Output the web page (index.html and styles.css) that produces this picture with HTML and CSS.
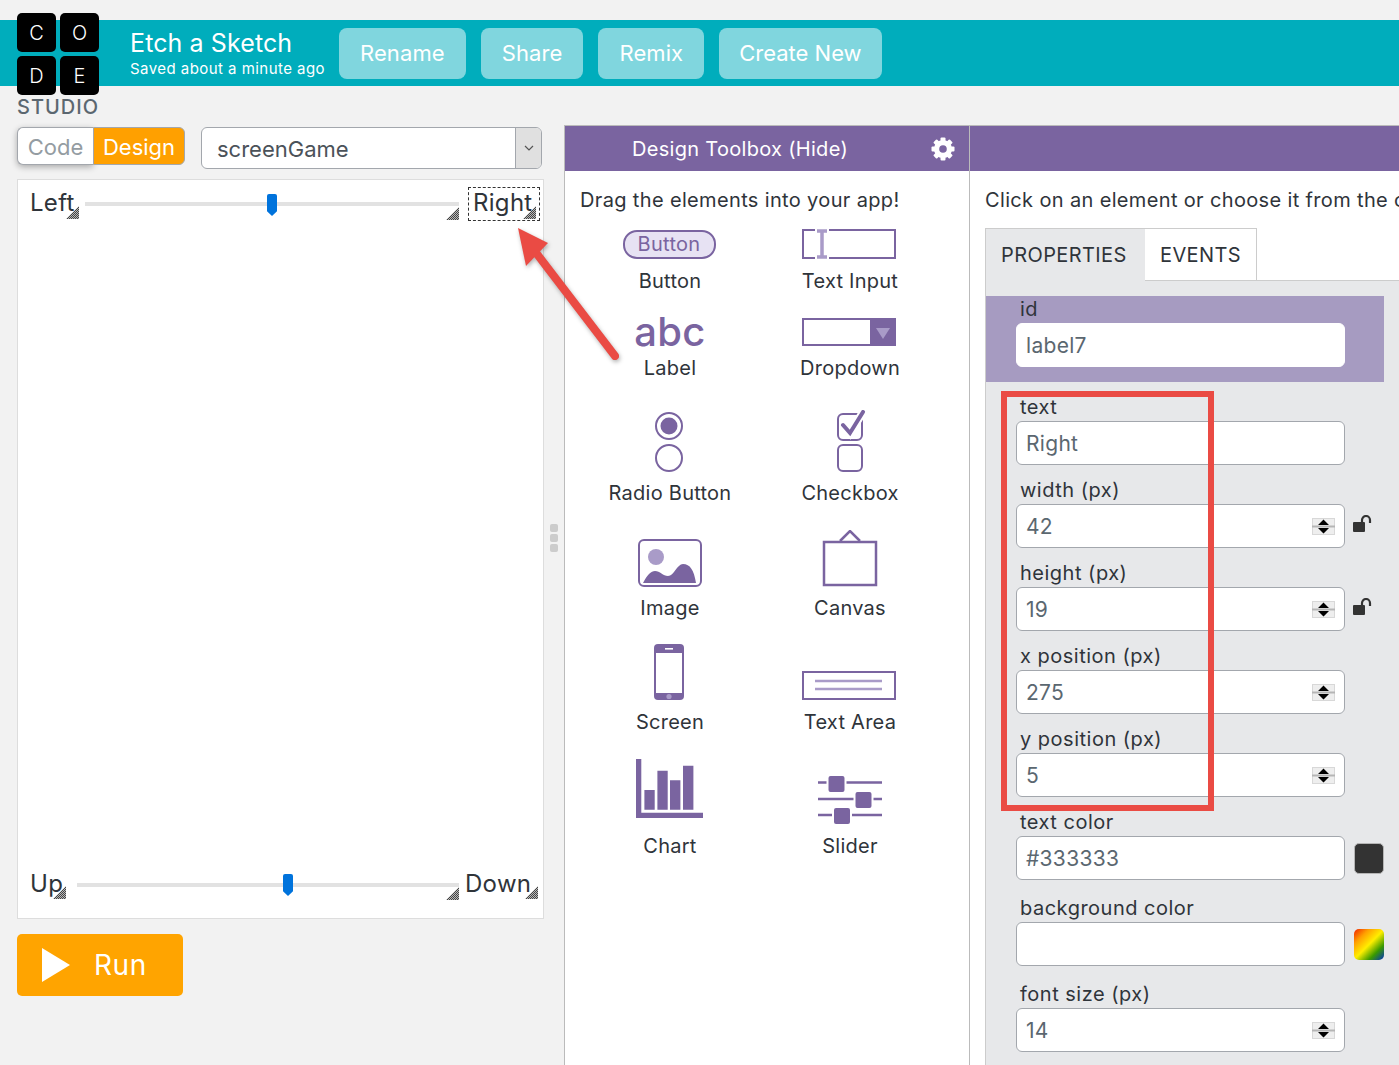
FILE: index.html
```html
<!doctype html>
<html>
<head>
    <title>Etch a Sketch - App Lab</title>
    <link rel="stylesheet" href="styles.css">
</head>
<body>
<div class="page">
    <!-- Logo sits over the header bar -->
    <div class="logo">
        <div class="logo-grid">
            <span>C</span><span>O</span><span>D</span><span>E</span>
        </div>
        <div class="logo-studio">STUDIO</div>
    </div>

    <header class="header">
        <div class="project">
            <div class="project-name">Etch a Sketch</div>
            <div class="project-saved">Saved about a minute ago</div>
        </div>
        <div class="header-btn">Rename</div>
        <div class="header-btn">Share</div>
        <div class="header-btn">Remix</div>
        <div class="header-btn">Create New</div>
    </header>

    <main class="main">
        <!-- App preview -->
        <section class="left">
            <div class="left-top">
                <div class="toggle">
                    <div class="toggle-code">Code</div>
                    <div class="toggle-design">Design</div>
                </div>
                <div class="screen-select">
                    <div class="screen-name">screenGame</div>
                    <div class="screen-arrow">
                        <svg width="10" height="6" viewBox="0 0 10 6"><path d="M1 1l4 4 4-4" fill="none" stroke="#555" stroke-width="1.2"/></svg>
                    </div>
                </div>
            </div>
            <div class="surface">
                <div class="w-text w-left">Left</div>
                <div class="handle h-left"></div>
                <div class="track track-1"></div>
                <div class="knob knob-1"></div>
                <div class="handle h-slider1"></div>
                <div class="w-selected"></div>
                <div class="w-text w-right">Right</div>
                <div class="handle h-right"></div>
                <div class="w-text w-up">Up</div>
                <div class="handle h-up"></div>
                <div class="track track-2"></div>
                <div class="knob knob-2"></div>
                <div class="handle h-slider2"></div>
                <div class="w-text w-down">Down</div>
                <div class="handle h-down"></div>
            </div>
            <div class="run-btn">
                <svg class="run-icon" width="28" height="34" viewBox="0 0 28 34"><path d="M0 0l28 17L0 34z" fill="#fff"/></svg>
                <span>Run</span>
            </div>
        </section>

        <div class="splitter">
            <div class="grip"><i></i><i></i><i></i></div>
        </div>

        <!-- Toolbox -->
        <section class="toolbox">
            <div class="panel-head">
                <span>Design Toolbox (Hide)</span>
                <svg class="gear" width="24" height="24" viewBox="0 0 24 24">
                    <circle cx="12" cy="12" r="6.6" fill="none" stroke="#fff" stroke-width="5"/>
                    <g fill="#fff">
                        <rect x="9.5" y="0.5" width="5" height="23" rx="1"/>
                        <rect x="9.5" y="0.5" width="5" height="23" rx="1" transform="rotate(45 12 12)"/>
                        <rect x="9.5" y="0.5" width="5" height="23" rx="1" transform="rotate(90 12 12)"/>
                        <rect x="9.5" y="0.5" width="5" height="23" rx="1" transform="rotate(135 12 12)"/>
                    </g>
                    <circle cx="12" cy="12" r="3.8" fill="#7a64a0"/>
                </svg>
            </div>
            <p class="drag-hint">Drag the elements into your app!</p>
            <div class="tools">
                <div class="tool">
                    <div class="ico-button nudge">Button</div>
                    <div class="tool-name">Button</div>
                </div>
                <div class="tool">
                    <svg class="nudge" width="94" height="30" viewBox="0 0 94 30">
                        <path d="M13 1H1v28h12M27 1h66v28H27" fill="none" stroke="#7a64a0" stroke-width="2"/>
                        <path d="M20 1v28M15 2h10M15 28h10" fill="none" stroke="#a99bc8" stroke-width="3.5"/>
                    </svg>
                    <div class="tool-name">Text Input</div>
                </div>
                <div class="tool">
                    <div class="ico-abc">abc</div>
                    <div class="tool-name tool-name-tight">Label</div>
                </div>
                <div class="tool">
                    <svg class="ico-dropdown nudge" width="94" height="28" viewBox="0 0 94 28">
                        <rect x="1" y="1" width="92" height="26" fill="#fff" stroke="#7a64a0" stroke-width="2"/>
                        <rect x="68" y="0" width="26" height="28" fill="#7a64a0"/>
                        <path d="M74 10h14l-7 11z" fill="#a99bc8"/>
                    </svg>
                    <div class="tool-name tool-name-tight">Dropdown</div>
                </div>
                <div class="tool">
                    <svg class="nudge lower" width="28" height="62" viewBox="0 0 28 62">
                        <circle cx="14" cy="16" r="13" fill="none" stroke="#7a64a0" stroke-width="2"/>
                        <circle cx="14" cy="16" r="8.5" fill="#7a64a0"/>
                        <circle cx="14" cy="48" r="13" fill="none" stroke="#7a64a0" stroke-width="2"/>
                    </svg>
                    <div class="tool-name">Radio Button</div>
                </div>
                <div class="tool">
                    <svg class="lower" width="32" height="62" viewBox="0 0 32 62">
                        <rect x="4" y="4" width="24" height="26" rx="5" fill="none" stroke="#7a64a0" stroke-width="2"/>
                        <rect x="4" y="35" width="24" height="26" rx="5" fill="none" stroke="#7a64a0" stroke-width="2"/>
                        <path d="M9 15l7 8L29 2" fill="none" stroke="#fff" stroke-width="8"/>
                        <path d="M9 15l7 8L29 2" fill="none" stroke="#7a64a0" stroke-width="4" stroke-linecap="round"/>
                    </svg>
                    <div class="tool-name">Checkbox</div>
                </div>
                <div class="tool">
                    <svg class="lower" width="64" height="48" viewBox="0 0 64 48">
                        <rect x="1" y="1" width="62" height="46" rx="5" fill="none" stroke="#7a64a0" stroke-width="2"/>
                        <circle cx="18" cy="18" r="8" fill="#a99bc8"/>
                        <path d="M5 44C9 36 13 32 17 32c5 0 8 5 13 5C36 37 39 25 45 25c7 0 11 6 13 19z" fill="#7a64a0"/>
                    </svg>
                    <div class="tool-name">Image</div>
                </div>
                <div class="tool">
                    <svg class="lower" width="56" height="57" viewBox="0 1 56 57">
                        <rect x="2" y="13" width="52" height="43" fill="none" stroke="#7a64a0" stroke-width="2.5"/>
                        <path d="M18 12l10-10 10 10" fill="none" stroke="#7a64a0" stroke-width="2.5"/>
                    </svg>
                    <div class="tool-name">Canvas</div>
                </div>
                <div class="tool">
                    <svg class="nudge" width="30" height="56" viewBox="0 0 30 56">
                        <rect width="30" height="56" rx="4" fill="#7a64a0"/>
                        <rect x="2" y="9" width="26" height="40" fill="#fff"/>
                        <rect x="11" y="4" width="8" height="1.6" fill="#fff"/>
                        <circle cx="15" cy="52.5" r="2.6" fill="#a99bc8"/>
                    </svg>
                    <div class="tool-name">Screen</div>
                </div>
                <div class="tool">
                    <svg class="nudge" width="94" height="29" viewBox="0 0 94 29">
                        <rect x="1" y="1" width="92" height="27" fill="none" stroke="#7a64a0" stroke-width="2"/>
                        <path d="M13 10h67M13 18h67" stroke="#a99bc8" stroke-width="2.4"/>
                    </svg>
                    <div class="tool-name">Text Area</div>
                </div>
                <div class="tool">
                    <svg class="ico-chart" width="68" height="60" viewBox="0 0 68 60">
                        <path d="M0 0h5.3v53.7H67V59H0z" fill="#7a64a0"/>
                        <path d="M8.400 31h10.300v19.700H8.400zM21.400 11.700h10.300v39H21.400zM34 21.300h10.400v29.400H34zM47 6.700h10.400v44H47z" fill="#7a64a0"/>
                    </svg>
                    <div class="tool-name">Chart</div>
                </div>
                <div class="tool">
                    <svg class="lower" width="66" height="50" viewBox="0 0 66 50">
                        <path d="M1 7.500h64M1 24h64M1 40h64" stroke="#7a64a0" stroke-width="2.6"/>
                        <g fill="#7a64a0" stroke="#fff" stroke-width="2">
                            <rect x="10.500" y="0" width="18" height="18" rx="3"/>
                            <rect x="37.500" y="16" width="18" height="18" rx="3"/>
                            <rect x="16" y="32" width="18" height="18" rx="3"/>
                        </g>
                    </svg>
                    <div class="tool-name">Slider</div>
                </div>
            </div>
        </section>

        <!-- Properties -->
        <section class="props">
            <div class="panel-head panel-head-plain"></div>
            <p class="props-hint">Click on an element or choose it from the current screen to change its properties.</p>
            <div class="tabs">
                <div class="tab tab-active">PROPERTIES</div>
                <div class="tab">EVENTS</div>
            </div>
            <div class="tab-body">
                <div class="id-block">
                    <div class="prop-label">id</div>
                    <div class="prop-input prop-input-plain">label7</div>
                </div>
                <div class="prop">
                    <div class="prop-label">text</div>
                    <div class="prop-input">Right</div>
                </div>
                <div class="prop">
                    <div class="prop-label">width (px)</div>
                    <div class="prop-row">
                        <div class="prop-input">42
                            <svg class="spin" width="23" height="17" viewBox="0 0 23 17"><rect x=".5" y=".5" width="22" height="16" fill="#eeeeee" stroke="#d8d8d8"/><rect y="7.500" width="23" height="2" fill="#b5b5b5"/><path d="M11.500 1.500l5.500 5.500h-11zM11.500 15.500l5.500-5.500h-11z"/></svg>
                        </div>
                        <svg class="lock" width="20" height="18" viewBox="0 0 20 18"><rect x="0" y="7" width="12" height="10" rx="1" fill="#333"/><path d="M9 8V5a4 4 0 0 1 8 0v3" fill="none" stroke="#333" stroke-width="2.2"/></svg>
                    </div>
                </div>
                <div class="prop">
                    <div class="prop-label">height (px)</div>
                    <div class="prop-row">
                        <div class="prop-input">19
                            <svg class="spin" width="23" height="17" viewBox="0 0 23 17"><rect x=".5" y=".5" width="22" height="16" fill="#eeeeee" stroke="#d8d8d8"/><rect y="7.500" width="23" height="2" fill="#b5b5b5"/><path d="M11.500 1.500l5.500 5.500h-11zM11.500 15.500l5.500-5.500h-11z"/></svg>
                        </div>
                        <svg class="lock" width="20" height="18" viewBox="0 0 20 18"><rect x="0" y="7" width="12" height="10" rx="1" fill="#333"/><path d="M9 8V5a4 4 0 0 1 8 0v3" fill="none" stroke="#333" stroke-width="2.2"/></svg>
                    </div>
                </div>
                <div class="prop">
                    <div class="prop-label">x position (px)</div>
                    <div class="prop-input">275
                        <svg class="spin" width="23" height="17" viewBox="0 0 23 17"><rect x=".5" y=".5" width="22" height="16" fill="#eeeeee" stroke="#d8d8d8"/><rect y="7.500" width="23" height="2" fill="#b5b5b5"/><path d="M11.500 1.500l5.500 5.500h-11zM11.500 15.500l5.500-5.500h-11z"/></svg>
                    </div>
                </div>
                <div class="prop">
                    <div class="prop-label">y position (px)</div>
                    <div class="prop-input">5
                        <svg class="spin" width="23" height="17" viewBox="0 0 23 17"><rect x=".5" y=".5" width="22" height="16" fill="#eeeeee" stroke="#d8d8d8"/><rect y="7.500" width="23" height="2" fill="#b5b5b5"/><path d="M11.500 1.500l5.500 5.500h-11zM11.500 15.500l5.500-5.500h-11z"/></svg>
                    </div>
                </div>
                <div class="prop">
                    <div class="prop-label">text color</div>
                    <div class="prop-row">
                        <div class="prop-input">#333333</div>
                        <div class="swatch swatch-dark"></div>
                    </div>
                </div>
                <div class="prop prop-wide">
                    <div class="prop-label">background color</div>
                    <div class="prop-row">
                        <div class="prop-input"></div>
                        <div class="swatch swatch-rainbow"></div>
                    </div>
                </div>
                <div class="prop prop-wide">
                    <div class="prop-label">font size (px)</div>
                    <div class="prop-input">14
                        <svg class="spin" width="23" height="17" viewBox="0 0 23 17"><rect x=".5" y=".5" width="22" height="16" fill="#eeeeee" stroke="#d8d8d8"/><rect y="7.500" width="23" height="2" fill="#b5b5b5"/><path d="M11.500 1.500l5.500 5.500h-11zM11.500 15.500l5.500-5.500h-11z"/></svg>
                    </div>
                </div>
            </div>
        </section>
    </main>

    <!-- Screenshot annotations -->
    <svg class="note-arrow" width="120" height="145" viewBox="0 0 120 145">
        <path d="M105 136L27 34" stroke="#ea4b44" stroke-width="8" stroke-linecap="round"/>
        <path d="M8 8l30 15-22 23z" fill="#ea4b44"/>
    </svg>
    <div class="note-box"></div>
</div>
</body>
</html>
```

FILE: styles.css
```css
* {
    box-sizing: border-box;
}
body {
    margin: 0;
    padding: 0;
    font-family: Inter, "Noto Sans", sans-serif;
    background-color: #f2f2f2;
    color: #2f343a;
}
.page {
    position: relative;
    width: 1399px;
    height: 1065px;
    overflow: hidden;
    padding-top: 20px;
}

/* logo */
.logo {
    position: absolute;
    left: 17px;
    top: 13px;
    width: 82px;
}
.logo-grid {
    display: grid;
    grid-template-columns: 39px 39px;
    grid-template-rows: 39px 39px;
    gap: 4px;
}
.logo-grid span {
    display: flex;
    align-items: center;
    justify-content: center;
    background-color: #000000;
    color: #ffffff;
    border-radius: 5px;
    font-size: 20px;
    font-weight: 300;
}
.logo-studio {
    font-size: 20px;
    line-height: 24px;
    font-weight: 500;
    color: #5b6770;
    letter-spacing: 1px;
}

/* header */
.header {
    display: flex;
    align-items: center;
    gap: 15px;
    height: 66px;
    padding-left: 130px;
    background-color: #00adbc;
    color: #ffffff;
}
.project {
    width: 194px;
}
.project-name {
    font-size: 25px;
    line-height: 30px;
    letter-spacing: 0.1px;
}
.project-saved {
    font-size: 15px;
    line-height: 20px;
    margin-top: 1px;
    letter-spacing: 0.45px;
    white-space: nowrap;
}
.header-btn {
    display: flex;
    align-items: center;
    height: 51px;
    padding: 0 21px;
    background-color: #80d6de;
    border-radius: 8px;
    font-size: 22px;
    letter-spacing: 0.1px;
}
.header-btn:last-child {
    padding: 0 20px 0 20px;
    letter-spacing: 0;
}

/* main columns */
.main {
    display: flex;
    height: 979px;
}
.left {
    width: 544px;
    padding: 41px 0 0 17px;
    flex-shrink: 0;
}
.left-top {
    display: flex;
    align-items: flex-start;
    gap: 16px;
    height: 52px;
}
.toggle {
    display: flex;
    width: 168px;
    height: 38px;
    font-size: 22px;
    line-height: 38px;
    text-align: center;
}
.toggle-code {
    width: 76px;
    background-color: #ffffff;
    color: #949ca2;
    border: 1px solid #a3a7ad;
    border-right: 0;
    border-radius: 6px 0 0 6px;
    box-shadow: 0 2px 6px rgba(0, 0, 0, 0.3);
}
.toggle-design {
    width: 92px;
    background-color: #ffa000;
    color: #ffffff;
    border: 1px solid #a3a7ad;
    border-radius: 0 6px 6px 0;
}
.screen-select {
    display: flex;
    width: 341px;
    height: 42px;
    background-color: #ffffff;
    border: 1px solid #a3a7ad;
    border-radius: 6px;
    overflow: hidden;
}
.screen-name {
    flex: 1;
    padding-left: 15px;
    font-size: 22px;
    line-height: 42px;
    color: #4b5259;
}
.screen-arrow {
    display: flex;
    align-items: center;
    justify-content: center;
    width: 26px;
    background-color: #e0e0e0;
    border-left: 1px solid #a3a7ad;
}

/* design surface, widgets are placed freely */
.surface {
    position: relative;
    width: 527px;
    height: 740px;
    background-color: #ffffff;
    border: 1px solid #dddddd;
}
.w-text {
    position: absolute;
    font-size: 24px;
    line-height: 28px;
    letter-spacing: 0.3px;
    color: #2f343a;
}
.w-left { left: 12px; top: 9px; }
.w-right { left: 455px; top: 9px; }
.w-up { left: 12px; top: 690px; }
.w-down { left: 447px; top: 690px; }
.w-selected {
    position: absolute;
    left: 450px;
    top: 7px;
    width: 72px;
    height: 34px;
    border: 1px dashed #333333;
}
.track {
    position: absolute;
    height: 4px;
    background-color: #e2e2e2;
}
.track-1 { left: 67px; top: 22px; width: 374px; }
.track-2 { left: 59px; top: 703px; width: 382px; }
.knob {
    position: absolute;
    width: 10px;
    height: 22px;
    background-color: #0073dc;
    border-radius: 2px 2px 0 0;
    clip-path: polygon(0 0, 100% 0, 100% 78%, 50% 100%, 0 78%);
}
.knob-1 { left: 249px; top: 14px; }
.knob-2 { left: 265px; top: 694px; }
.handle {
    position: absolute;
    width: 13px;
    height: 13px;
    clip-path: polygon(100% 0, 100% 100%, 0 100%);
    background: repeating-conic-gradient(#444444 0 25%, #b8b8b8 0 50%) 0 0 / 2px 2px;
}
.h-left { left: 48px; top: 26px; }
.h-slider1 { left: 428px; top: 27px; }
.h-right { left: 505px; top: 26px; }
.h-up { left: 35px; top: 706px; }
.h-slider2 { left: 428px; top: 707px; }
.h-down { left: 507px; top: 706px; }
.run-btn {
    display: flex;
    align-items: center;
    width: 166px;
    height: 62px;
    margin-top: 15px;
    padding-left: 25px;
    background-color: #ffa400;
    border-radius: 5px;
    color: #ffffff;
    font-size: 28px;
    letter-spacing: 0.6px;
}
.run-icon {
    margin-right: 24px;
}

.splitter {
    display: flex;
    align-items: center;
    justify-content: center;
    width: 20px;
    padding-bottom: 76px;
    flex-shrink: 0;
}
.grip {
    display: flex;
    flex-direction: column;
    gap: 2px;
}
.grip i {
    display: block;
    width: 8px;
    height: 8px;
    background-color: #cccccc;
    border-radius: 2px;
}

/* toolbox */
.toolbox {
    width: 406px;
    margin-top: 39px;
    background-color: #ffffff;
    border-top: 1px solid #bbbbbb;
    border-left: 1px solid #bbbbbb;
    border-right: 1px solid #bbbbbb;
    flex-shrink: 0;
}
.panel-head {
    position: relative;
    height: 45px;
    padding-left: 67px;
    background-color: #7a64a0;
    color: #ffffff;
    font-size: 20px;
    line-height: 46px;
    letter-spacing: 0.3px;
}
.gear {
    position: absolute;
    left: 366px;
    top: 11px;
}
.drag-hint {
    margin: 17px 0 8px 15px;
    font-size: 20px;
    line-height: 24px;
    letter-spacing: 0.35px;
}
.tools {
    display: grid;
    grid-template-columns: 180px 180px;
    grid-template-rows: 73px 87px 125px 115px 114px 124px;
    margin-left: 15px;
}
.tool {
    display: flex;
    flex-direction: column;
    align-items: center;
    justify-content: flex-end;
}
.tool-name {
    margin-top: 10px;
    font-size: 20px;
    line-height: 24px;
    letter-spacing: 0.25px;
    white-space: nowrap;
}
.tool-name-tight {
    margin-top: 4px;
}
/* these icons sit a pixel left or lower than the centred spot */
.nudge {
    margin-right: 2px;
}
.lower {
    margin-bottom: -1px;
}
.ico-button {
    width: 93px;
    height: 29px;
    background-color: #e7e2f3;
    border: 2px solid #7a64a0;
    border-radius: 14px;
    color: #7a64a0;
    font-size: 20px;
    line-height: 25px;
    letter-spacing: 0.3px;
    text-align: center;
}
.ico-abc {
    height: 38px;
    margin-bottom: 1px;
    font-size: 40px;
    line-height: 38px;
    font-weight: 500;
    letter-spacing: 0.3px;
    color: #7a64a0;
}
.ico-dropdown {
    margin-bottom: 6px;
}
.ico-chart {
    margin-bottom: 5px;
}

/* properties */
.props {
    flex: 1;
    min-width: 0;
    margin-top: 39px;
    background-color: #ffffff;
    border-top: 1px solid #bbbbbb;
    overflow: hidden;
}
.panel-head-plain {
    padding: 0;
}
.props-hint {
    margin: 17px 0 16px 15px;
    font-size: 20px;
    line-height: 24px;
    letter-spacing: 0.35px;
    white-space: nowrap;
}
.tabs {
    display: flex;
    height: 53px;
    margin-left: 15px;
    font-size: 20px;
    letter-spacing: 0.4px;
    border-bottom: 1px solid #cccccc;
}
.tab {
    height: 53px;
    padding: 0 15px;
    line-height: 52px;
    background-color: #ffffff;
    border: 1px solid #cccccc;
    border-left: 0;
}
.tab-active {
    width: 160px;
    background-color: #e7e8ea;
    border-left: 1px solid #cccccc;
    border-right: 0;
    border-bottom: 0;
    white-space: nowrap;
}
.tab-body {
    height: 800px;
    margin-left: 15px;
    padding-top: 15px;
    background-color: #e7e8ea;
    border-left: 1px solid #cccccc;
}
.id-block {
    width: 398px;
    padding: 0 0 15px 30px;
    background-color: #a69bc1;
}
.prop {
    margin: 12px 0 0 30px;
}
.prop-wide {
    margin-top: 15px;
}
.prop-label {
    padding-left: 4px;
    font-size: 20px;
    line-height: 27px;
    letter-spacing: 0.5px;
    white-space: nowrap;
}
.prop-row {
    display: flex;
    align-items: center;
}
.prop-input {
    display: flex;
    align-items: center;
    justify-content: space-between;
    flex-shrink: 0;
    width: 329px;
    height: 44px;
    padding: 0 9px 0 9px;
    background-color: #ffffff;
    border: 1px solid #a3a7ad;
    border-radius: 6px;
    font-size: 21px;
    letter-spacing: 0.3px;
    color: #5b6770;
}
.prop-input-plain {
    border-color: #ffffff;
}
.lock {
    margin: -4px 0 0 8px;
}
.swatch {
    width: 30px;
    height: 31px;
    margin-left: 9px;
    border-radius: 5px;
}
.swatch-dark {
    background-color: #333333;
    border: 1px solid #b5b5b5;
}
.swatch-rainbow {
    background: linear-gradient(135deg, #f02000 0%, #ffa000 25%, #ffee00 50%, #3a9a00 75%, #0030c0 100%);
}

/* annotations */
.note-arrow {
    position: absolute;
    left: 510px;
    top: 220px;
    filter: drop-shadow(1px 2px 2px rgba(0, 0, 0, 0.3));
}
.note-box {
    position: absolute;
    left: 1001px;
    top: 391px;
    width: 213px;
    height: 420px;
    border: 6px solid #ea4b44;
}
```
